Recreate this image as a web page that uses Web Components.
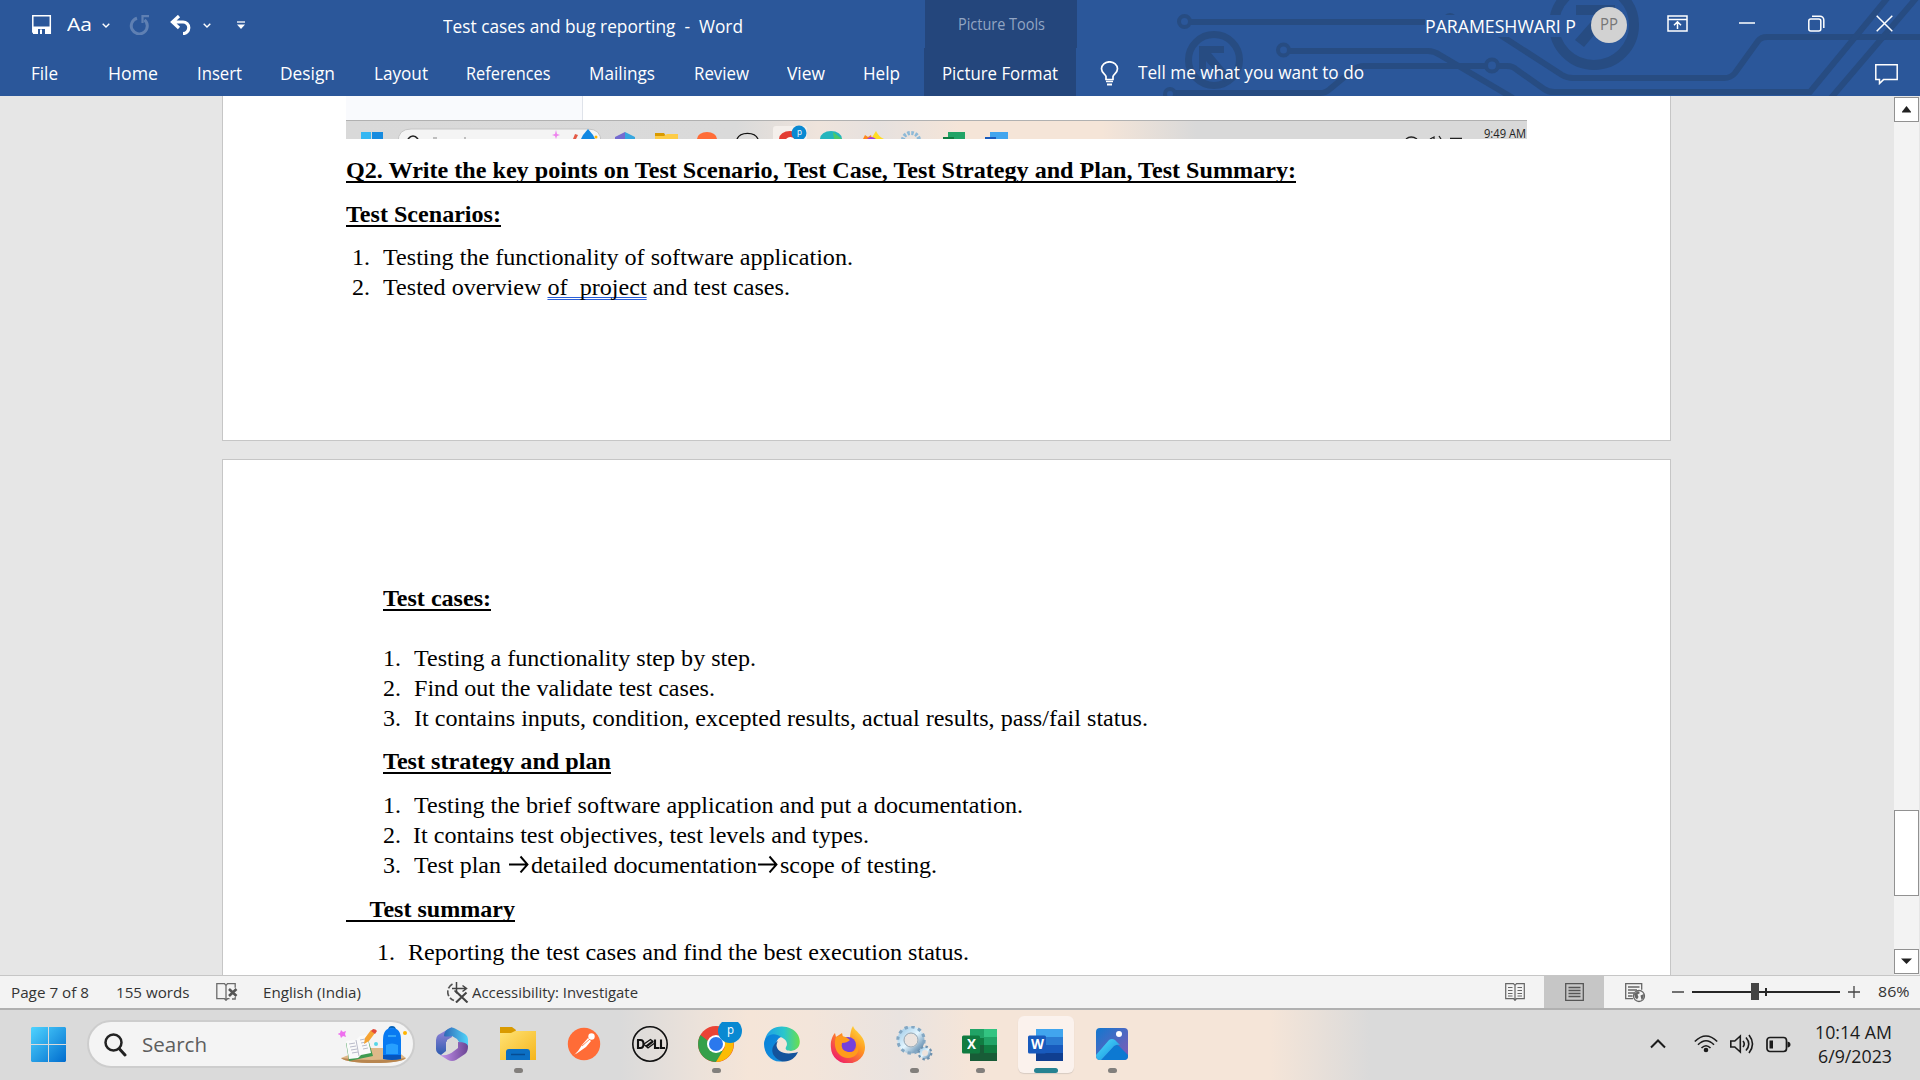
<!DOCTYPE html>
<html lang="en">
<head>
<meta charset="utf-8">
<title>Test cases and bug reporting - Word</title>
<style>
html,body{margin:0;padding:0;width:1920px;height:1080px;overflow:hidden;background:#e6e6e6}
body{font-family:"Open Sans","Noto Sans",sans-serif}
</style>
</head>
<body>
<app-window></app-window>
<script>
const ICONS = {
save:[20,20,'<path fill="none" stroke="#fff" stroke-width="1.500" d="M.8.800h17.500v17.500H2L.8 17z"/><path fill="#fff" d="M1 11.500h17V19H1z"/><path fill="#2b579a" d="M6 14h7v5H6z"/><path fill="#fff" d="M8 14.500h2V19H8z"/>'],
caret:[8,5,'<path fill="none" stroke="#fff" stroke-width="1.400" d="M.7.7 4 4 7.300.7"/>'],
redo:[21,20,'<path fill="none" stroke="#5f80b3" stroke-width="3" d="M8 3.200A8 8 0 1 0 15.500 4.800"/><path fill="none" stroke="#5f80b3" stroke-width="2.200" d="M20 1.200h-6.500V8"/>'],
undo:[22,20,'<path fill="none" stroke="#fff" stroke-width="3.200" d="M9 1 2.500 7 9 13M3 7h10a5.800 5.800 0 0 1 0 11.600"/>'],
more:[8,9,'<path stroke="#fff" stroke-width="1.300" d="M0 1h8"/><path fill="#fff" d="M0 3.500h8L4 8z"/>'],
ribbon:[21,17,'<path fill="none" stroke="#fff" stroke-width="1.500" d="M1 1h19v15H1zM1 4.500h19M10.500 14V7M7 10.200l3.500-3.400 3.500 3.400"/>'],
min:[16,2,'<path stroke="#fff" stroke-width="1.500" d="M0 1h16"/>'],
restore:[17,17,'<rect x=".8" y="4" width="12" height="12" rx="2" fill="none" stroke="#fff" stroke-width="1.500"/><path fill="none" stroke="#fff" stroke-width="1.500" d="M4 1.200h8a3.700 3.700 0 0 1 3.800 3.700V13"/>'],
close:[17,17,'<path stroke="#fff" stroke-width="1.500" d="m.7.7 15.600 15.600M16.300.7.7 16.300"/>'],
bulb:[19,25,'<path fill="none" stroke="#fff" stroke-width="1.700" d="M6 18.500v-3C5.600 13 1.500 12 1.500 7.800a8 7 0 0 1 16 0C17.500 12 13.400 13 13 15.500v3zM6 20.500h7"/><path stroke="#fff" stroke-width="2" d="M7 23.500h5"/>'],
comment:[23,21,'<path fill="none" stroke="#fff" stroke-width="1.500" d="M.8.8h21.400v14.800H8.500L4.500 19.500v-3.900H.8z"/>'],
arrow:[20,18,'<path fill="none" stroke="#000" stroke-width="1.900" d="M0 9.500h18M11.500 1.500l7 8-7 8"/>'],
proof:[22,18,'<path fill="none" stroke="#6b6b6b" stroke-width="1.300" d="M10 17V2.500L8.500.7H.8v15h7.700L10 17.300l1.500-1.600h2M10 2.500 11.500.7h7.700v4M19.200 14v2H16"/><path stroke="#555" stroke-width="2.600" d="m13 6 7.500 7M20.500 6 13 13"/>'],
access:[22,21,'<path fill="none" stroke="#555" stroke-width="1.700" stroke-dasharray="6 2" d="M5.500 2A9 9 0 0 0 7 18.500"/><path fill="none" stroke="#444" stroke-width="1.500" d="M9.500 0v10M5 6.500h14M15.500 3.500l4 3-4 3M7.500 8.500l3 3"/><path fill="none" stroke="#444" stroke-width="2.100" d="m9 9.500 11.500 11M19.500 10.500 9 20.500"/>'],
read:[20,18,'<path fill="none" stroke="#666" stroke-width="1.200" d="M10 2.300 8.500.7H.7v15h7.800l1.500 1.700 1.500-1.700h7.800V.7h-7.800zV17M3 4.500h4.500M3 7.500h4.500M3 10.500h4.500M3 13h4.500M12.500 4.500H17M12.500 7.500H17M12.500 10.500H17M12.500 13H17"/>'],
print:[19,18,'<path fill="none" stroke="#555" stroke-width="1.300" d="M.7.7h17.600v16.600H.7zM3.500 4.500h12M3.500 7.500h12M3.500 10.500h12M3.500 13.500h12"/>'],
web:[21,20,'<path fill="none" stroke="#666" stroke-width="1.300" d="M8 15.700H.7V.7h16v6M3 4h11.500M3 7h9M3 10h6M3 13h4.500"/><circle cx="14" cy="13" r="5.500" fill="#f3f3f3" stroke="#666" stroke-width="1.300"/><path fill="#666" d="m9 11 4-3 2 2-2.500 1.500 1 2.500-1.500 2.500-2-2zM15.500 12.500l3.500-1.500-.5 4-2 2z"/>'],
minus:[12,2,'<path stroke="#444" stroke-width="1.500" d="M0 1h12"/>'],
plus:[12,12,'<path stroke="#444" stroke-width="1.300" d="M0 6h12M6 0v12"/>'],
slider:[148,18,'<path stroke="#262626" stroke-width="2" d="M0 9h148"/><path fill="#262626" d="M73 5h2v8h-2z"/><path fill="#444" d="M59 0h8v17h-8z"/>'],
up:[9,7,'<path fill="#222" d="M4.500 0 9.500 6.500H-.5z"/>'],
down:[11,7,'<path fill="#222" d="M0 .5h11L5.500 6z"/>'],
win:[35,35,'<defs><linearGradient id="k" gradientUnits="userSpaceOnUse" x1="0" y1="0" x2="35" y2="35"><stop stop-color="#4fd4ff"/><stop offset="1" stop-color="#006cce"/></linearGradient></defs><path fill="url(#k)" d="M1 0h16v17H0V1zM18 0h16l1 1v16H18zM0 18h17v17H1l-1-1zM18 18h17v16l-1 1H18z"/>'],
mag:[23,24,'<circle cx="9.500" cy="9.500" r="8" fill="none" stroke="#222" stroke-width="2.500"/><path stroke="#222" stroke-width="3" stroke-linecap="round" d="m15.500 16 5.500 6"/>'],
school:[70,38,'<path fill="#dfb889" d="M3 32 28 22h27l13 10q-5 5-32 5T3 32"/><path fill="#b88650" d="M3 32q30 4 65 0-5 5-32 5T3 32"/><path fill="#3f9b50" d="m8 17 22-4 5 17-24 5z"/><path fill="#fafafa" d="m8 15 10-1 4-4 7-1 4 18-10 2-3 3-9 1z"/><path stroke="#b9bbc9" stroke-width="1" d="m18 14 3 16m-10-12 6-1m-5 4 6-1m-5 4 6-1m-5 4 6-1m2-12 5-1m-4 4 5-1m-4 4 5-1m-4 4 5-1"/><path fill="#f6a332" d="m26 18 1-6 6-8 4 3-6 8z"/><path fill="#e24a3b" d="m33 5 2-2q3 0 4 2l-2 3z"/><path fill="#ee70ee" d="m3 4 2 2 3-1-1 3 1 3-3-1-2 2-1-3-3-1 3-1z"/><circle cx="38" cy="18" r="2" fill="#56d6e8"/><circle cx="67" cy="7" r="2" fill="#ffb400"/><path fill="none" stroke="#0964b8" stroke-width="1.800" d="M51 4q0-3 3-3t3 3"/><path fill="#087af2" d="M45 14q0-12 9-12t9 12v18H45z"/><path fill="#0755bd" d="M45 29h18v4q-9 2-18 0z"/><path fill="#27a0ff" d="M48 19q6-3 12 0v9H48z"/><path stroke="#5fd0ff" d="M50 10h8"/>'],
copilot:[34,36,'<defs><linearGradient id="a" x2="0" y2="1"><stop stop-color="#a088dc"/><stop offset="1" stop-color="#2d5bb0"/></linearGradient><linearGradient id="b"><stop stop-color="#2f68b5"/><stop offset="1" stop-color="#51d4fa"/></linearGradient><linearGradient id="c"><stop stop-color="#c695ee"/><stop offset="1" stop-color="#6b4494"/></linearGradient></defs><path fill="url(#a)" d="M3 9 17 1v11l-6 4v9l-5 4q-5-2-5-6v-9q0-3 2-5"/><path fill="url(#b)" d="M13 3q4-3 8 0l9 5q3 2 3 6v9q-2-5-9-7l-2-3-5-3q-7 1-8 0 0-5 4-7"/><path fill="url(#c)" d="M33 20q0 6-3 8l-9 6q-4 2-8 0l-8-5q9 1 14-4l4-3v-6q9 0 10 4"/><path fill="#d9d9d9" d="m12 14 5-3 5 3v7l-5 3-5-3z"/>'],
folder:[36,34,'<path fill="#d99a00" d="M0 0h12l4 3-2 4H0z"/><defs><linearGradient id="f" x2="1" y2="1"><stop stop-color="#ffe375"/><stop offset="1" stop-color="#f5b51c"/></linearGradient></defs><path fill="url(#f)" d="M0 6h11l4-2h21v29H0z"/><path fill="#0b6fc4" d="M6 33v-8q0-3 3-3h18q3 0 3 3v8z"/><path stroke="#064c92" stroke-width="1.500" d="M11 27.500h14"/>'],
postman:[34,34,'<circle cx="17" cy="17" r="16.200" fill="#ff6c37"/><circle cx="24.500" cy="9.500" r="3.200" fill="#fff"/><path fill="#fff" d="m21 11 3 3-5 6-10 7 6-9zM7 28l10-10 1 2z"/><path stroke="#ff6c37" stroke-width=".8" d="m15 19 8-7"/>'],
dell:[36,36,'<circle cx="18" cy="18" r="17.200" fill="none" stroke="#111" stroke-width="1.600"/><path fill="none" stroke="#111" stroke-width="2.100" d="M6 14v8h2.500q3 0 3-4t-3-4H5M23 13.500V22h4.500M29 13.500V22H33"/><path fill="none" stroke="#111" stroke-width="1.300" d="m12 18 6.500-4.500 2 1.500-6.500 5M15 20.500l6.500-5M12 18.500l4 3.500 6-4.500"/>'],
chrome:[46,40,'<circle cx="18" cy="22" r="18" fill="#ea4335"/><path fill="#34a04b" d="M2.500 13A18 18 0 0 0 18 40l7-11-7-4z"/><path fill="#fbbc05" d="M18 40a18 18 0 0 0 17-23H19l8 8z"/><circle cx="18" cy="22" r="9" fill="#fff"/><circle cx="18" cy="22" r="7" fill="#2b78ed"/><circle cx="32" cy="9" r="12" fill="#0989d2"/>'],
edge:[36,36,'<defs><linearGradient id="e"><stop stop-color="#1e9ee8"/><stop offset=".55" stop-color="#2ac6cc"/><stop offset="1" stop-color="#69df4e"/></linearGradient><linearGradient id="h" x2="1" y2="1"><stop stop-color="#0881d9"/><stop offset="1" stop-color="#1690dd"/></linearGradient></defs><path fill="url(#e)" d="M1 14C4-3 27-3 34 9c4 8 1 15-7 16-5 0-6-2-5-4 4-6-5-12-12-10-5 1-8 4-9 7z"/><path fill="url(#h)" d="M0 18C0 9 10 5 17 11c-8 3-6 17 3 24C8 38 0 28 0 18"/><path fill="#14549c" d="M14 15c-5 7 3 16 20 11-3 7-10 11-17 9-10-4-12-14-3-20"/>'],
firefox:[36,37,'<defs><linearGradient id="x" x1="1" y1="0" x2=".2" y2="1"><stop stop-color="#fff044"/><stop offset=".45" stop-color="#ff9420"/><stop offset="1" stop-color="#ef176c"/></linearGradient></defs><path fill="url(#x)" d="M5 7 6 11l6-4 1 4 7 1c0-4 1-9 3-12 2 6 12 9 12 21A17 16 0 0 1 1 22C0 15 3 9 5 7"/><circle cx="18" cy="19" r="8" fill="#7540dc"/><path fill="#ff9b1c" d="M6 11q7-3 14 3-3 3-8 3-2 7 6 9 8 1 10-7c2 8-3 13-10 13C6 31 3 19 6 11"/>'],
gears:[37,36,'<defs><linearGradient id="q" x2="1" y2="1"><stop stop-color="#a5cee9"/><stop offset=".5" stop-color="#e4f6ff"/><stop offset="1" stop-color="#5b86aa"/></linearGradient></defs><circle cx="15" cy="14" r="10.500" fill="none" stroke="url(#q)" stroke-width="6"/><circle cx="15" cy="14" r="13.200" fill="none" stroke="#83a7c3" stroke-width="3" stroke-dasharray="3.400 3.500"/><circle cx="15" cy="14" r="7" fill="none" stroke="#8fa7b8"/><circle cx="29" cy="27" r="4.500" fill="none" stroke="url(#q)" stroke-width="3"/><circle cx="29" cy="27" r="6.300" fill="none" stroke="#6e91ae" stroke-width="2.200" stroke-dasharray="2.400 2.500"/>'],
excel:[36,33,'<path fill="#21a366" d="M8 1h14v10H8z"/><path fill="#33c481" d="M22 1h13v9H22z"/><path fill="#107c41" d="M8 10h14v7H8zM22 17h13v8H22z"/><path fill="#21a366" d="M22 9h13v8H22z"/><path fill="#185c37" d="M8 17h14v8h13v8H8z"/><rect y="7.500" width="18" height="18" rx="1.500" fill="#107c41"/>'],
word:[36,33,'<path fill="#41a5ee" d="M8 1h27v8H8z"/><path fill="#2b7cd3" d="M8 9h27v8H8z"/><path fill="#185abd" d="M8 17h27v8H8z"/><path fill="#103f91" d="M8 25h27v8H8z"/><rect y="7.500" width="18" height="18" rx="1.500" fill="#185abd"/>'],
photos:[32,32,'<defs><linearGradient id="p" x2="1" y2="1"><stop stop-color="#1178cf"/><stop offset="1" stop-color="#8659b5"/></linearGradient><linearGradient id="r" x2="1" y2="1"><stop stop-color="#53defa"/><stop offset="1" stop-color="#0e8ee0"/></linearGradient></defs><rect width="32" height="32" rx="4" fill="url(#p)"/><circle cx="23" cy="6" r="3" fill="#fff"/><path fill="#0d79d2" d="m5 32 13-14q3-2 5 0l9 9v1q0 4-4 4z"/><path fill="url(#r)" d="M0 27 13 12q3-2 6 0l5 5q-3-1-6 1L5 32H4q-4 0-4-5"/>'],
chev:[16,10,'<path fill="none" stroke="#1b1b1b" stroke-width="2" d="m1 8.500 7-7 7 7"/>'],
wifi:[24,18,'<g fill="none" stroke="#1b1b1b" stroke-width="1.600"><path d="M.8 6.500Q12-4.500 23.200 6.500M4 9.800q8-8 16 0M7.500 13q4.500-4.500 9 0"/></g><circle cx="12" cy="15" r="2.300" fill="#1b1b1b"/>'],
vol:[24,20,'<path fill="none" stroke="#1b1b1b" stroke-width="1.600" d="M.8 7h4l5.500-5v16l-5.500-5h-4zM13 7q2.500 3 0 6M16 3.500q5.500 6.500 0 13M19 1q7 9 0 18"/>'],
batt:[25,17,'<rect x="1" y="1.500" width="19.500" height="14" rx="3" fill="none" stroke="#1b1b1b" stroke-width="1.700"/><path fill="#1b1b1b" d="M3.500 4.500H7v8H3.500zM21.500 5.500q3 .5 3 3t-3 3z"/>']
};
class UiIcon extends HTMLElement{
  constructor(){super();this.attachShadow({mode:"open"});}
  connectedCallback(){
    const [w,h,body]=ICONS[this.getAttribute("name")];
    this.shadowRoot.innerHTML=`<style>:host{display:block;flex:none;width:${w}px;height:${h}px}svg{display:block}</style><svg width="${w}" height="${h}" viewBox="0 0 ${w} ${h}">${body}</svg>`;
  }
}
/* A one-line text run condensed or widened to the width given in "w". */
class UiText extends HTMLElement{
  constructor(){super();this.attachShadow({mode:"open"});
    this.shadowRoot.innerHTML='<style>:host{display:block;flex:none;white-space:pre}span{display:inline-block;transform-origin:0 50%;text-decoration-line:var(--line,none);text-decoration-thickness:2px;text-underline-offset:3px;text-decoration-skip-ink:none}</style><span><slot></slot></span>';
    UiText.all.add(this);}
  fit(){
    const w=+this.getAttribute("w"),s=this.shadowRoot.querySelector("span");
    if(!w)return;
    this.style.width=w+"px";
    const n=s.getBoundingClientRect().width;
    if(n)s.style.transform=`scaleX(${w/n})`;
  }
}
UiText.all=new Set();
function element(name,html){
  const t=document.createElement("template");t.innerHTML=html;
  customElements.define(name,class extends HTMLElement{
    constructor(){super();this.attachShadow({mode:"open"}).append(t.content.cloneNode(true));}
  });
}
customElements.define("ui-icon",UiIcon);
customElements.define("ui-text",UiText);

element("circuit-art",`<style>:host{display:block;position:absolute;left:0;top:0;width:1920px;height:96px}svg{display:block}</style>
<svg width="1920" height="96"><g fill="none" stroke="#274c82" stroke-width="6">
<circle cx="1184.500" cy="21.500" r="5.500" stroke-width="4"/><path d="M1191 22H1475L1494 31 1562 75Q1567 78 1573 78H1724Q1731 78 1735 73L1758 41Q1761 37 1767 37H1920"/>
<circle cx="1450" cy="20" r="5" stroke-width="4"/>
<circle cx="1283.500" cy="50" r="5.500" stroke-width="4"/><path d="M1290 51H1428Q1434 51 1440 55L1513 98"/>
<circle cx="1492" cy="65.500" r="6" stroke-width="4"/><path d="M1486 66H1364Q1358 66 1353 70L1330 89Q1326 93 1320 93H1176M1498 66H1507Q1513 66 1517 70L1544 89Q1548 92 1554 92H1810L1889 -4M1831 98 1918 -4"/>
<circle cx="1170" cy="94" r="5" stroke-width="4"/>
<circle cx="1214" cy="60" r="25.500" stroke-width="7"/><circle cx="1594" cy="25" r="40" stroke-width="10"/></g>
<path fill="#274c82" d="M1199 46h25v7h-13l20 24-6 6-19-22v10h-7zM1576 5h39v36l-9-9V21l-22 26-9-7 22-25h-21z"/></svg>`);

element("title-bar",`<style>:host{display:flex;box-sizing:border-box;height:48px;padding-left:32px;color:#fff;font-size:17.500px;line-height:30px;align-items:flex-start;position:relative}
.t{margin-top:11px}.ctx{width:152px;height:48px;background:#24467c;color:#92a5c3;font-size:15.500px;box-sizing:border-box;padding:9px 0 0 33px;margin-left:182px}
.av{width:36px;height:36px;border-radius:50%;background:#d2d2d2;color:#777;font-size:15.500px;line-height:35px;display:flex;justify-content:center;margin:7px 0 0 15px}.nm{background:#2b579a;line-height:22px;margin-top:15px;margin-left:348px}</style>
<ui-icon name="save" style="margin-top:15px"></ui-icon><ui-text w="25" style="margin:9px 0 0 15px;font-size:19px">Aa</ui-text>
<ui-icon name="caret" style="margin:23px 0 0 10px"></ui-icon><ui-icon name="redo" style="margin:15px 0 0 19px"></ui-icon>
<ui-icon name="undo" style="margin:15px 0 0 20px"></ui-icon><ui-icon name="caret" style="margin:23px 0 0 11px"></ui-icon>
<ui-icon name="more" style="margin:21px 0 0 26px"></ui-icon>
<ui-text class="t" w="300" style="margin-left:198px">Test cases and bug reporting  -  Word</ui-text>
<div class="ctx"><ui-text w="87">Picture Tools</ui-text></div>
<ui-text class="nm" w="151">PARAMESHWARI P</ui-text>
<div class="av"><ui-text w="18">PP</ui-text></div>
<ui-icon name="ribbon" style="margin:15px 0 0 40px"></ui-icon><ui-icon name="min" style="margin:22px 0 0 51px"></ui-icon>
<ui-icon name="restore" style="margin:15px 0 0 53px"></ui-icon><ui-icon name="close" style="margin:15px 0 0 51px"></ui-icon>`);

element("tab-strip",`<style>:host{display:flex;box-sizing:border-box;height:48px;padding-left:30.500px;color:#fff;font-size:17.500px;line-height:30px;position:relative}
ui-text{margin-top:10px}.ctx{width:152px;height:48px;background:#24467c;margin-left:24px;display:flex;justify-content:center}</style>
<ui-text w="27">File</ui-text><ui-text w="50" style="margin-left:50.500px">Home</ui-text><ui-text w="45" style="margin-left:38.500px">Insert</ui-text>
<ui-text w="55" style="margin-left:38.500px">Design</ui-text><ui-text w="54" style="margin-left:39px">Layout</ui-text>
<ui-text w="84.500" style="margin-left:37.500px">References</ui-text><ui-text w="66" style="margin-left:38.500px">Mailings</ui-text>
<ui-text w="55" style="margin-left:39px">Review</ui-text><ui-text w="38" style="margin-left:38px">View</ui-text>
<ui-text w="37" style="margin-left:38.500px">Help</ui-text><div class="ctx"><ui-text w="116">Picture Format</ui-text></div>
<ui-icon name="bulb" style="margin:13px 0 0 24px"></ui-icon><ui-text w="226" style="margin:9px 0 0 19px">Tell me what you want to do</ui-text>
<ui-icon name="comment" style="margin:16px 0 0 511px"></ui-icon>`);

element("pasted-picture",`<style>:host{display:block;width:1181px;height:43px;position:relative;overflow:hidden}svg{display:block}
ui-text{position:absolute;left:1138px;top:30px;font-size:12px;line-height:16px;color:#222}</style>
<svg width="1181" height="43"><defs><linearGradient id="g"><stop stop-color="#d9d9d9"/><stop offset=".33" stop-color="#dadada"/><stop offset=".4" stop-color="#efe4dc"/><stop offset=".45" stop-color="#e6e1df"/><stop offset=".52" stop-color="#f5e5d8"/><stop offset=".64" stop-color="#f5e5d8"/><stop offset=".72" stop-color="#d9d9d9"/></linearGradient></defs>
<path fill="#fff" d="M0 0h1181v24H0z"/><path fill="#f9fafd" d="M0 0h236v24H0z"/><path fill="#dfe3ea" d="M236 0h1v24h-1z"/>
<path fill="url(#g)" d="M0 24h1181v19H0z"/><path fill="#b1b1b1" d="M0 24h1181v1H0z"/>
<path fill="#35b7f2" d="M15 36h10v7H15z"/><path fill="#168bdf" d="M26 36h11v7H26z"/>
<path fill="#f4f4f4" stroke="#c5c5c5" d="M52 46q0-13 13-13h177q13 0 13 13z"/><path fill="none" stroke="#222" stroke-width="1.600" d="M62 43q5-6 10 0"/><path stroke="#888" d="M87 42h4m28 1v-2"/>
<path fill="#ee82ee" d="m210 34 1 4 3 1-3 1-1 3-1-3-3-1 3-1z"/><path fill="#e45a45" d="m227 43 2-5 3 1-2 4z"/><path fill="#1288e2" d="m235 43 2-4 5-6 5 6 2 4z"/><circle cx="250" cy="41" r="1.500" fill="#ffb400"/>
<path fill="#746bd0" d="m269 41 10-5v7h-10z"/><path fill="#37a6df" d="m279 36 10 5v2h-10z"/>
<path fill="#d99a00" d="M309 37h9l2 3h-11z"/><path fill="#fdcc47" d="M309 40h9l3-2h11v5h-23z"/>
<path fill="#ff6c37" d="M351 43a10 7 0 0 1 20 0z"/><path fill="none" stroke="#111" stroke-width="1.300" d="M391 43a11 8 0 0 1 21 0"/>
<rect x="427" y="30" width="34" height="18" rx="3" fill="#f4efeb"/><path fill="#e33c32" d="M433 43a11 8 0 0 1 22 0z"/><path fill="#fff" d="M440 43q4-4 9 0z"/><circle cx="453" cy="37" r="7.500" fill="#0989d2"/>
<path fill="#24b5bd" d="M474 43a11 8 0 0 1 22 0z"/><path fill="#4bc969" d="m487 36 9 7h-8z"/>
<path fill="#ff861e" d="m517 43 2-4 3 2 3-2 1 4z"/><path fill="#ffdd22" d="m525 43 5-8q2 5 8 8z"/><path fill="#a33bdd" d="M521 43q4-4 9 0z"/>
<path fill="none" stroke="#8db9d7" stroke-width="4" stroke-dasharray="2.500 1.500" d="M557 44a8 7 0 0 1 16 0"/>
<path fill="#21a366" d="M602 36h17v7h-17z"/><path fill="#107c41" d="M597 41h11v2h-11z"/><path fill="#41a5ee" d="M644 36h18v7h-18z"/><path fill="#185abd" d="M639 41h11v2h-11z"/>
<path fill="none" stroke="#222" stroke-width="1.300" d="M1060 43q5-4 11 0M1084 43l4-2v2m5-3 2 3M1104 42.500h12"/></svg>
<ui-text w="42">9:49 AM</ui-text><ui-text w="5" style="left:451px;top:28px;color:#fff;font-size:9px">p</ui-text>`);

element("doc-line",`<style>:host{display:flex;height:30px;line-height:30px;flex:none;font-family:"Liberation Serif","Times New Roman",serif;font-size:24px;color:#000}
:host([heading]){font-weight:bold;--line:underline}</style><slot></slot>`);

element("doc-page",`<style>:host{display:flex;flex-direction:column;box-sizing:border-box;width:1449px;background:#fff;border:1px solid #c6c6c6;flex:none;padding-left:123px}</style><slot></slot>`);

element("scroll-bar",`<style>:host{display:flex;flex-direction:column;width:25px;background:#f3f3f3;height:878px;margin:1px 1px 0 0;flex:none}
div{box-sizing:border-box;width:25px;border:1px solid #919191;background:#fff;display:flex;align-items:center;justify-content:center;flex:none;height:25px}</style>
<div><ui-icon name="up"></ui-icon></div><div style="height:86px;margin-top:688px"></div><div style="margin-top:53px"><ui-icon name="down"></ui-icon></div>`);

element("doc-area",`<style>:host{display:flex;height:879px;overflow:hidden;background:#e6e6e6;border-bottom:1px solid #c6c6c6}
.c{display:flex;flex-direction:column;padding-left:222px;gap:18px;width:1894px;box-sizing:border-box;flex:none}
.p1{height:345px;border-top:0}.p2{height:700px}
.l{padding-left:37px}</style>
<div class="c">
<doc-page class="p1"><pasted-picture></pasted-picture>
<doc-line heading style="margin-top:16px"><ui-text w="950">Q2. Write the key points on Test Scenario, Test Case, Test Strategy and Plan, Test Summary:</ui-text></doc-line>
<doc-line heading style="margin-top:14px"><ui-text w="155">Test Scenarios:</ui-text></doc-line>
<doc-line style="margin-top:13px;padding-left:6px"><ui-text w="18">1.</ui-text><ui-text w="470" style="margin-left:13px">Testing the functionality of software application.</ui-text></doc-line>
<doc-line style="padding-left:6px"><ui-text w="18">2.</ui-text><ui-text w="407" style="margin-left:13px">Tested overview <span style="text-decoration:underline double #2a5fd8 1px;text-underline-offset:2px;text-decoration-skip-ink:none">of  project</span> and test cases.</ui-text></doc-line>
</doc-page>
<doc-page class="p2">
<doc-line heading style="margin-top:123px;padding-left:37px"><ui-text w="108">Test cases:</ui-text></doc-line>
<doc-line class="l" style="margin-top:30px"><ui-text w="18">1.</ui-text><ui-text w="342" style="margin-left:13px">Testing a functionality step by step.</ui-text></doc-line>
<doc-line class="l"><ui-text w="18">2.</ui-text><ui-text w="301" style="margin-left:13px">Find out the validate test cases.</ui-text></doc-line>
<doc-line class="l"><ui-text w="18">3.</ui-text><ui-text w="734" style="margin-left:13px">It contains inputs, condition, excepted results, actual results, pass/fail status.</ui-text></doc-line>
<doc-line heading style="margin-top:13px;padding-left:37px"><ui-text w="228">Test strategy and plan</ui-text></doc-line>
<doc-line class="l" style="margin-top:14px"><ui-text w="18">1.</ui-text><ui-text w="609" style="margin-left:12.500px">Testing the brief software application and put a documentation.</ui-text></doc-line>
<doc-line class="l"><ui-text w="18">2.</ui-text><ui-text w="456" style="margin-left:12px">It contains test objectives, test levels and types.</ui-text></doc-line>
<doc-line class="l"><ui-text w="18">3.</ui-text><ui-text w="87" style="margin-left:12.500px">Test plan</ui-text><ui-icon name="arrow" style="margin:5px 0 0 8px"></ui-icon><ui-text w="226" style="margin-left:2px">detailed documentation</ui-text><ui-icon name="arrow" style="margin:5px 0 0 1.500px"></ui-icon><ui-text w="157" style="margin-left:2px">scope of testing.</ui-text></doc-line>
<doc-line heading style="margin-top:14px"><ui-text w="169">&nbsp;&nbsp;&nbsp; Test summary</ui-text></doc-line>
<doc-line style="margin-top:13px;padding-left:31px"><ui-text w="18">1.</ui-text><ui-text w="561" style="margin-left:13px">Reporting the test cases and find the best execution status.</ui-text></doc-line>
</doc-page></div>
<scroll-bar></scroll-bar>`);

element("status-bar",`<style>:host{display:flex;height:32px;background:#f3f3f3;border-bottom:2px solid #b0b0b0;color:#333;font-size:14.800px;line-height:30px;align-items:flex-start;padding-left:11px}
ui-text{margin-top:.5px}.v{width:60px;height:32px;background:#c6c6c6;display:flex;justify-content:center;margin-left:19px}</style>
<ui-text w="78">Page 7 of 8</ui-text><ui-text w="73.500" style="margin-left:26.500px">155 words</ui-text><ui-icon name="proof" style="margin:7px 0 0 27px"></ui-icon>
<ui-text w="98" style="margin-left:25px">English (India)</ui-text><ui-icon name="access" style="margin:6px 0 0 86px"></ui-icon><ui-text w="166" style="margin-left:3px">Accessibility: Investigate</ui-text>
<ui-icon name="read" style="margin:7px 0 0 867px"></ui-icon><div class="v"><ui-icon name="print" style="margin-top:7px"></ui-icon></div>
<ui-icon name="web" style="margin:7px 0 0 21px"></ui-icon><ui-icon name="minus" style="margin:15px 0 0 26px"></ui-icon><ui-icon name="slider" style="margin:7px 0 0 8px"></ui-icon>
<ui-icon name="plus" style="margin:10px 0 0 8px"></ui-icon><ui-text w="31.500" style="margin-left:18px;margin-top:0">86%</ui-text>`);

element("task-app",`<style>:host{display:flex;flex-direction:column;align-items:center;box-sizing:border-box;width:56px;height:57px;margin-right:10px;position:relative;flex:none;border-radius:6px}
:host([active]){background:#fbf2ed;box-shadow:0 1px 1px #d8cbc2}
.i{height:52px;display:flex;align-items:center;padding-top:2px}i{display:none;width:9px;height:5px;border-radius:3px;background:#827f7c;position:absolute;top:52px}
:host([open]) i{display:block}:host([active]) i{display:block;width:24px;background:#268291}</style><div class="i"><slot></slot></div><i></i>`);

element("task-bar",`<style>:host{display:flex;height:70px;box-sizing:border-box;align-items:flex-start;padding-left:31px;background:linear-gradient(90deg,#dadada 0,#dadada 620px,#ece2da 700px,#f5e5d8 750px,#f3e5da 810px,#e9e3e0 900px,#f5e5d8 970px,#f5e5d8 1270px,#dadada 1370px);color:#1b1b1b}
.s{display:flex;width:328px;height:48px;box-sizing:border-box;border-radius:24px;background:#f4f4f4;border:2px solid #cdcdcd;margin:10px 0 0 21px;padding-left:15px;color:#5d5d5d;font-size:20.500px;line-height:44px}
.apps{display:flex;margin:6px 0 0 9px}.g{position:absolute;color:#fff;font-weight:bold}.clk{font-size:17.500px;line-height:24px;margin:10px 0 0 24px;display:flex;flex-direction:column;align-items:flex-end}</style>
<ui-icon name="win" style="margin-top:17px"></ui-icon>
<div class="s"><ui-icon name="mag" style="margin-top:11px"></ui-icon><ui-text w="65" style="margin-left:15px">Search</ui-text><ui-icon name="school" style="margin:4px 0 0 131px"></ui-icon></div>
<div class="apps">
<task-app><ui-icon name="copilot"></ui-icon></task-app>
<task-app open><ui-icon name="folder"></ui-icon></task-app>
<task-app><ui-icon name="postman"></ui-icon></task-app>
<task-app><ui-icon name="dell"></ui-icon></task-app>
<task-app open><ui-icon name="chrome" style="margin:-5px -10px 0 0"></ui-icon><ui-text class="g" w="7" style="left:38.500px;top:4px;font-size:12px;line-height:20px;font-weight:400">p</ui-text></task-app>
<task-app><ui-icon name="edge"></ui-icon></task-app>
<task-app><ui-icon name="firefox"></ui-icon></task-app>
<task-app open><ui-icon name="gears"></ui-icon></task-app>
<task-app open><ui-icon name="excel"></ui-icon><ui-text class="g" w="9" style="left:14.500px;top:18px;font-size:14px;line-height:20px">X</ui-text></task-app>
<task-app active><ui-icon name="word"></ui-icon><ui-text class="g" w="13" style="left:12.500px;top:18px;font-size:14px;line-height:20px">W</ui-text></task-app>
<task-app open><ui-icon name="photos"></ui-icon></task-app>
</div>
<ui-icon name="chev" style="margin:29px 0 0 500px"></ui-icon><ui-icon name="wifi" style="margin:25px 0 0 28px"></ui-icon>
<ui-icon name="vol" style="margin:24px 0 0 12px"></ui-icon><ui-icon name="batt" style="margin:26px 0 0 12px"></ui-icon>
<div class="clk"><ui-text w="77">10:14 AM</ui-text><ui-text w="74">6/9/2023</ui-text></div>`);

element("app-window",`<style>:host{display:flex;flex-direction:column;width:1920px;height:1080px;overflow:hidden}
header{display:block;height:96px;background:#2b579a;position:relative;overflow:hidden}</style>
<header><circuit-art></circuit-art><title-bar></title-bar><tab-strip></tab-strip></header>
<doc-area></doc-area><status-bar></status-bar><task-bar></task-bar>`);
UiText.all.forEach(t=>{if(t.isConnected)t.fit();});
</script>
</body>
</html>
